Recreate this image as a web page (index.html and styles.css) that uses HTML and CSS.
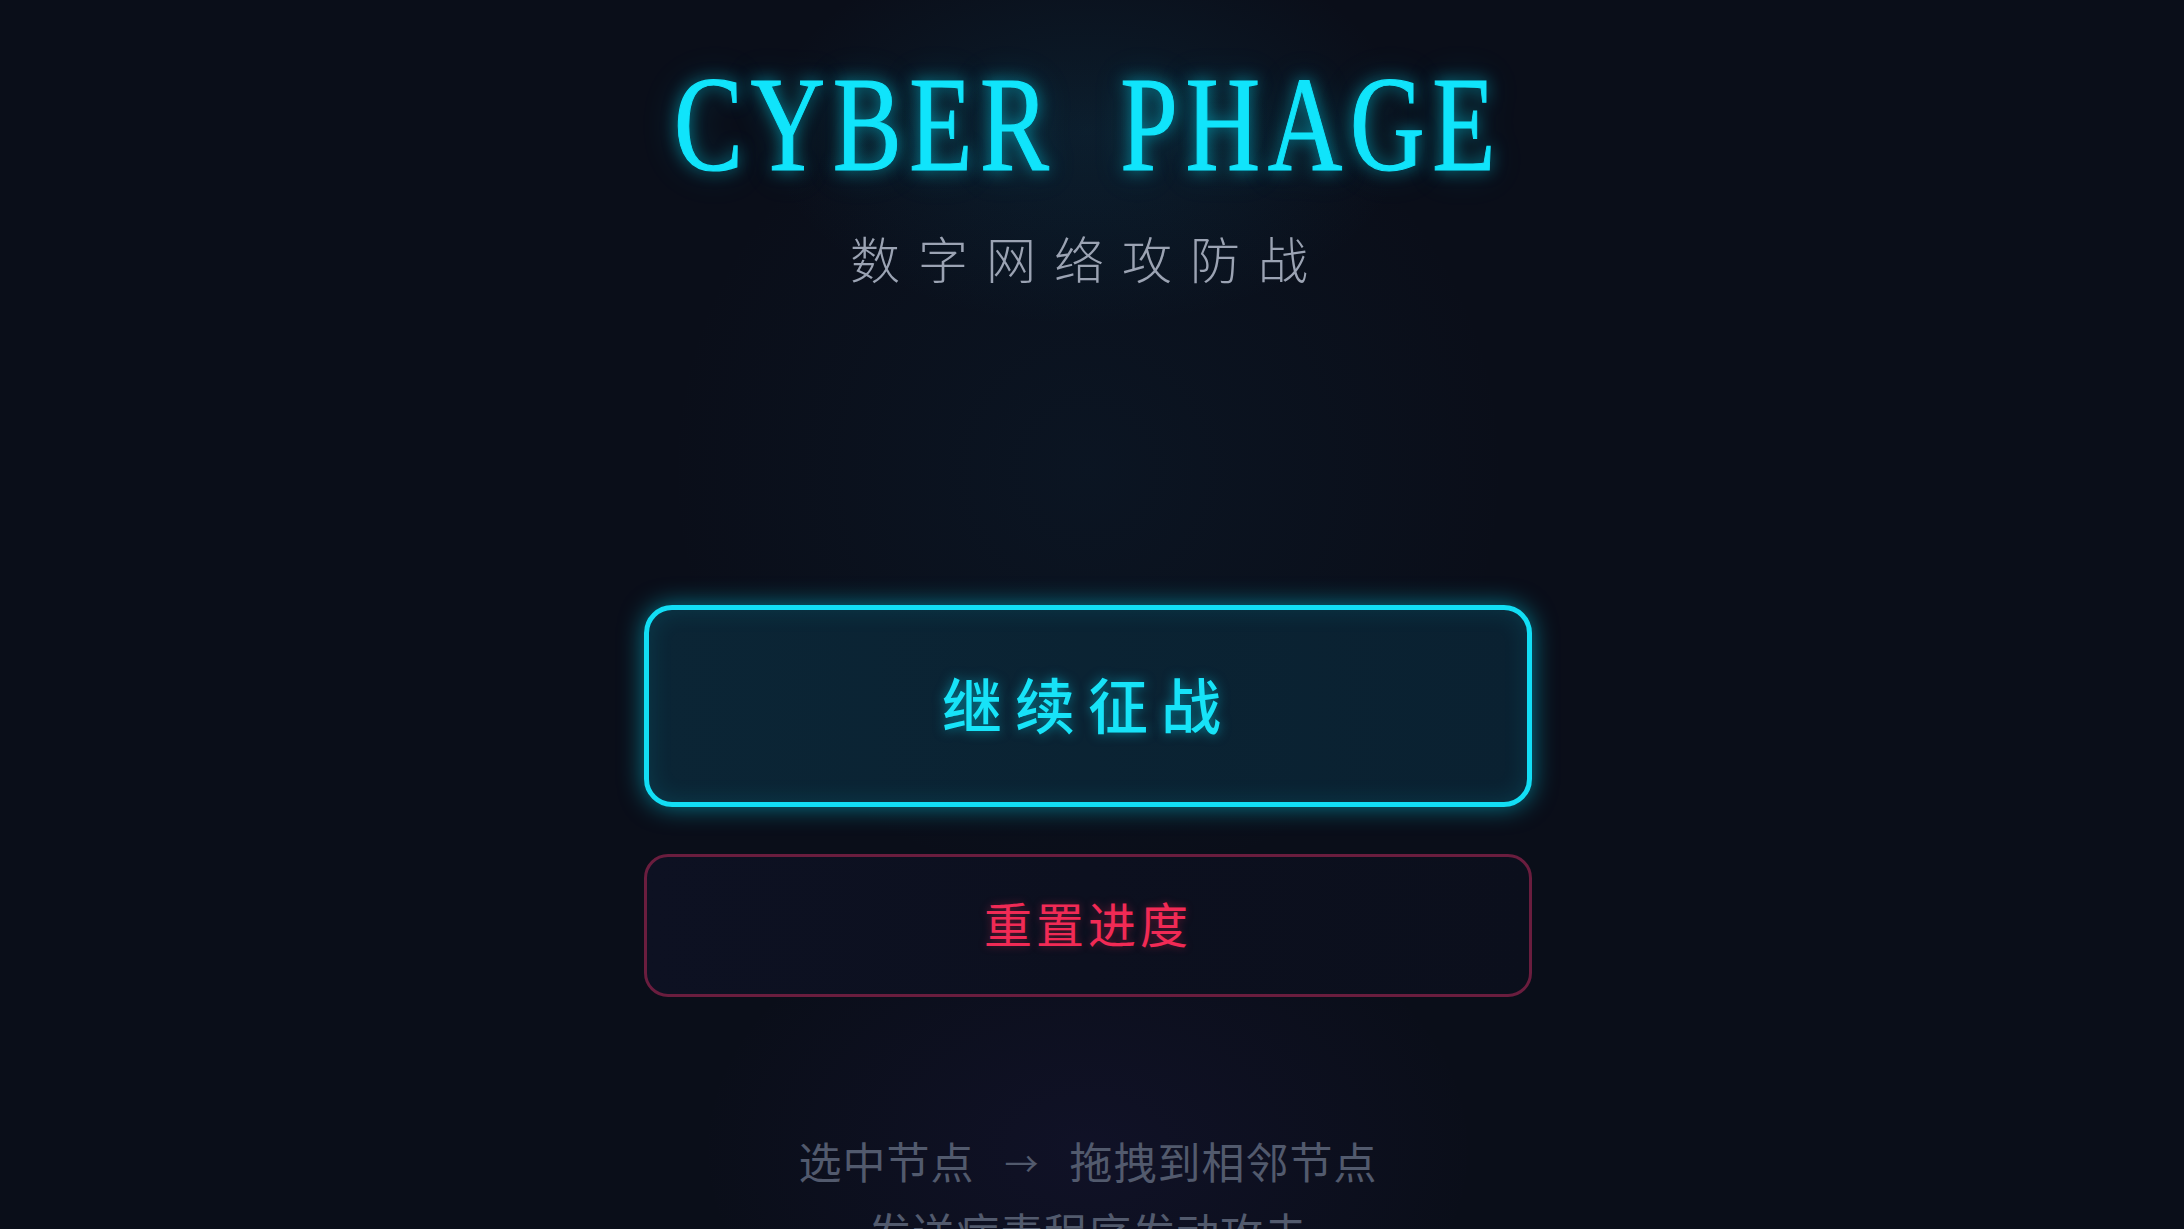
FILE: index.html
```html
<!DOCTYPE html>
<html lang="zh-CN">
<head>
<meta charset="utf-8">
<title>CYBER PHAGE</title>
<link rel="stylesheet" href="styles.css">
</head>
<body>
<main class="screen">
  <header class="brand">
    <h1 class="title"><span class="title-text">CYBER PHAGE</span></h1>
    <p class="subtitle">数字网络攻防战</p>
  </header>
  <nav class="menu">
    <button class="btn btn-primary" type="button">继续征战</button>
    <button class="btn btn-danger" type="button">重置进度</button>
  </nav>
  <p class="help">选中节点<span class="arrow">→</span>拖拽到相邻节点<br>发送病毒程序发动攻击</p>
</main>
</body>
</html>
```

FILE: styles.css
```css
html, body {
  margin: 0;
  height: 100%;
}

body {
  overflow: hidden;
  background:
    radial-gradient(ellipse 460px 280px at 1088px 130px, rgba(20, 120, 160, 0.14), transparent 70%),
    radial-gradient(ellipse 560px 560px at 1088px 470px, rgba(20, 90, 130, 0.09), transparent 75%),
    radial-gradient(ellipse 520px 360px at 1088px 1150px, rgba(90, 60, 200, 0.08), transparent 75%),
    #0a0e19;
  font-family: "Noto Sans CJK SC", "Noto Sans", sans-serif;
}

.screen {
  display: flex;
  flex-direction: column;
  align-items: center;
  padding: 56px 8px 0 0;
  box-sizing: border-box;
  height: 100%;
}

.brand {
  display: flex;
  flex-direction: column;
  align-items: center;
}

.title {
  margin: 0;
  font-family: "Liberation Serif", "Times New Roman", serif;
  font-weight: 400;
  font-size: 136px;
  line-height: 136px;
  color: #10e4fb;
  white-space: nowrap;
}

.title-text {
  display: inline-block;
  letter-spacing: 10px;
  word-spacing: 40px;
  transform: scaleX(0.76);
  -webkit-text-stroke: 1.2px #10e4fb;
  text-shadow: 0 0 18px rgba(0, 229, 255, 0.55), 0 0 40px rgba(0, 229, 255, 0.25);
}

.subtitle {
  margin: 35px 0 0;
  font-size: 50px;
  line-height: 60px;
  font-weight: 300;
  letter-spacing: 18px;
  color: #9ba3b3;
}

.menu {
  display: flex;
  flex-direction: column;
  align-items: center;
  gap: 47px;
  margin-top: 318px;
}

.btn {
  width: 888px;
  box-sizing: border-box;
  font-family: "Noto Sans CJK SC", "Noto Sans", sans-serif;
  cursor: pointer;
  padding: 0 0 8px;
}

.btn-primary {
  height: 202px;
  border: 5px solid #12def5;
  border-radius: 28px;
  background: linear-gradient(90deg, #0b2535 0%, #0a2131 100%);
  box-shadow: 0 0 24px rgba(0, 229, 255, 0.5), inset 0 0 24px rgba(0, 229, 255, 0.12);
  color: #17e3f8;
  font-size: 60px;
  font-weight: 500;
  letter-spacing: 13px;
  text-shadow: 0 0 12px rgba(0, 229, 255, 0.5);
}

.btn-danger {
  height: 143px;
  border: 3px solid #6a1d3e;
  border-radius: 24px;
  background: linear-gradient(90deg, #0d1122 0%, #0b0f1c 100%);
  color: #f12a55;
  font-size: 48px;
  font-weight: 400;
  letter-spacing: 4px;
  text-shadow: 0 0 8px rgba(255, 40, 85, 0.35);
}

.help {
  margin: 129px 0 0;
  font-size: 43px;
  line-height: 68px;
  text-align: center;
  color: #525a6d;
  letter-spacing: 1px;
}

.arrow {
  display: inline-block;
  margin: 0 30px;
  font-size: 34px;
  vertical-align: 2px;
}
```
